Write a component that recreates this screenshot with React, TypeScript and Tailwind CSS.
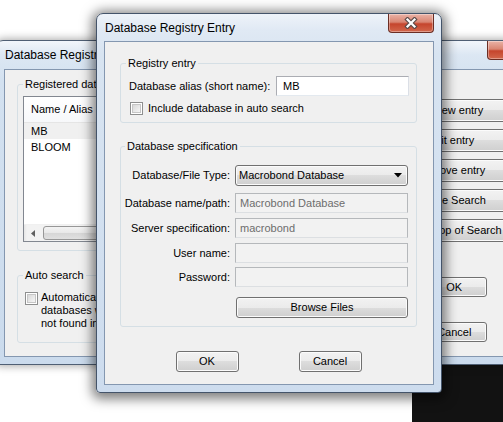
import type { ReactNode } from 'react'

const btnFace =
  'rounded-[3px] border border-[#707070] bg-[linear-gradient(#f2f2f2,#ebebeb_50%,#dddddd_50%,#cfcfcf)] shadow-[inset_0_0_0_1px_#fbfbfb]'

function WinButton({ children, className = '' }: { children: ReactNode; className?: string }) {
  return (
    <div className={`flex items-center justify-center text-[11px] text-black ${btnFace} ${className}`}>
      {children}
    </div>
  )
}

function CloseButton({ className = '' }: { className?: string }) {
  return (
    <div
      className={`flex h-[19px] w-[46px] items-center justify-center rounded-b-[4px] border border-t-0 border-[#6b2e24] bg-[linear-gradient(#eab3a7,#d98572_45%,#c5452d_55%,#d2674c)] shadow-[inset_0_0_0_1px_rgba(255,255,255,0.35)] ${className}`}
    >
      <svg width="14" height="12" viewBox="0 0 14 12">
        <path d="M3.5 2.5 L10.5 9.5 M10.5 2.5 L3.5 9.5" stroke="#5a4a48" strokeWidth="4.4" strokeLinecap="square" />
        <path d="M3.5 2.5 L10.5 9.5 M10.5 2.5 L3.5 9.5" stroke="#ffffff" strokeWidth="2.2" strokeLinecap="square" />
      </svg>
    </div>
  )
}

function CheckBox({ className = '' }: { className?: string }) {
  return (
    <div className={`h-[13px] w-[13px] shrink-0 border border-[#8e8f8f] bg-white p-[1px] ${className}`}>
      <div className="h-full w-full border border-[#c6c6c6] bg-[linear-gradient(135deg,#d8d8d8,#f6f6f6)]" />
    </div>
  )
}

// fieldset keeps no padding so the legend sits at a fixed offset; padding goes on the inner div
function GroupBox({
  title,
  legendClass = 'ml-[5px]',
  className = '',
  inner = '',
  children,
}: {
  title: string
  legendClass?: string
  className?: string
  inner?: string
  children: ReactNode
}) {
  return (
    <fieldset className={`rounded-[3px] border border-[#d5dfe5] ${className}`}>
      <legend className={`px-[2px] text-[11px] leading-[14px] ${legendClass}`}>{title}</legend>
      <div className={inner}>{children}</div>
    </fieldset>
  )
}

function Field({ value = '' }: { value?: string }) {
  return (
    <div className="flex h-[20px] w-[173px] items-center border border-[#b5b8bb] border-b-[#dcdfe2] bg-[#f2f2f2] pl-[4px] text-[11px] text-[#6d6d6d]">
      {value}
    </div>
  )
}

function FormRow({ label, children, className = '' }: { label: string; children: ReactNode; className?: string }) {
  return (
    <div className={`flex items-center ${className}`}>
      <div className="w-[109px] text-right text-[11px]">{label}</div>
      <div className="ml-[5px]">{children}</div>
    </div>
  )
}

function BackWindow() {
  const sideButtons = [
    { text: 'New entry', pad: 'pl-[20px]' },
    { text: 'Edit entry', pad: 'pl-[14px]' },
    { text: 'Remove entry', pad: 'pl-[3px]' },
    { text: 'Enable Search', pad: 'pl-[0px]' },
    { text: 'Top of Search', pad: 'pl-[20px]' },
  ]

  return (
    <div className="absolute left-[-4px] top-[40px] flex h-[325px] w-[545px] flex-col rounded-t-[7px] rounded-b-[4px] border border-[#4f5f74] bg-[linear-gradient(#f2f6fb,#dce7f3_14px,#d3e1f0_40px,#cbdbed)] px-[7px] pb-[7px] shadow-[0_0_8px_1px_rgba(0,0,0,0.35)]">
      <div className="relative flex h-[28px] items-center pl-[1px] text-[12px]">
        Database Registry
        <CloseButton className="absolute right-0 top-0" />
      </div>
      <div className="flex flex-1 border border-[#8497b0] bg-[#f0f0f0] pl-[12px]">
        <div className="mt-[7px] flex w-[360px] flex-col">
          <GroupBox title="Registered databases" legendClass="ml-[5px]" inner="px-[5px] pb-[8px]">
            <div className="mt-[5px] flex h-[146px] flex-col border border-[#828790] bg-white">
              <div className="flex h-[26px] items-center border-b border-[#e5e5e5] bg-[linear-gradient(#ffffff,#f7f8fa)] pl-[7px] text-[11px]">
                Name / Alias
              </div>
              <div className="flex h-[16px] items-center bg-[#f0f0f0] pl-[7px] text-[11px]">MB</div>
              <div className="flex h-[16px] items-center pl-[7px] text-[11px]">BLOOM</div>
              <div className="flex-1" />
              <div className="flex h-[17px] items-center border-t border-[#f0f0f0] bg-[linear-gradient(90deg,#e6e6e6,#f2f2f2_3px,#f2f2f2)]">
                <div className="flex w-[17px] justify-center">
                  <svg width="4" height="7" viewBox="0 0 4 7">
                    <path d="M4 0 L0 3.5 L4 7 Z" fill="#606060" />
                  </svg>
                </div>
                <div className="ml-[2px] h-[14px] flex-1 rounded-[3px] border border-[#979797] bg-[linear-gradient(#f3f3f3,#e8e8e8_50%,#d6d6d6_50%,#e0e0e0)]" />
              </div>
            </div>
          </GroupBox>
          <GroupBox title="Auto search" legendClass="ml-[5px]" className="mt-[17px]" inner="pb-[12px] pl-[7px]">
            <div className="mt-[10px] flex items-start">
              <CheckBox />
              <div className="ml-[3px] mt-[-1px] text-[11px] leading-[13px]">
                Automatically search in all registered
                <br />
                databases when a time series is
                <br />
                not found in the specified database
              </div>
            </div>
          </GroupBox>
        </div>
        <div className="ml-[38px] mt-[29px] flex w-[120px] flex-col">
          {sideButtons.map((b, i) => (
            <WinButton key={b.text} className={`h-[23px] justify-start ${b.pad} ${i > 0 ? 'mt-[7px]' : ''}`}>
              {b.text}
            </WinButton>
          ))}
          <WinButton className="ml-[9px] mt-[35px] h-[20px] w-[65px]">OK</WinButton>
          <WinButton className="ml-[9px] mt-[25px] h-[20px] w-[65px]">Cancel</WinButton>
        </div>
      </div>
    </div>
  )
}

function FrontWindow() {
  return (
    <div className="absolute left-[96px] top-[13px] flex h-[380px] w-[346px] flex-col rounded-t-[7px] rounded-b-[4px] border border-[#44546a] bg-[linear-gradient(#eef3f9,#e0e9f4_16px,#d8e4f1_40px,#cddcee)] px-[7px] pb-[7px] shadow-[0_2px_12px_4px_rgba(0,0,0,0.5)]">
      <div className="relative flex h-[27px] items-center pl-[1px] text-[12px]">
        Database Registry Entry
        <CloseButton className="absolute right-0 top-0" />
      </div>
      <div className="flex flex-1 flex-col border border-[#8497b0] bg-[#f0f0f0] pl-[15px] pr-[16px]">
        <GroupBox title="Registry entry" className="mt-[14px]" inner="pb-[7px] pl-[8px] pr-[7px]">
          <div className="mt-[6px] flex items-center">
            <div className="flex-1 text-[11px]">Database alias (short name):</div>
            <div className="flex h-[20px] w-[133px] items-center border border-[#abadb3] border-b-[#e3e9ef] border-r-[#dbdfe6] bg-white pl-[6px] text-[11px]">
              MB
            </div>
          </div>
          <div className="mt-[6px] flex items-center">
            <CheckBox className="ml-[1px]" />
            <div className="ml-[5px] text-[11px] leading-[13px]">Include database in auto search</div>
          </div>
        </GroupBox>

        <GroupBox title="Database specification" legendClass="ml-[4px]" className="mt-[16px]" inner="pb-[8px] pr-[8px]">
          <FormRow label="Database/File Type:" className="mt-[12px]">
            <div className={`flex h-[21px] w-[173px] items-center justify-between pl-[3px] pr-[5px] text-[11px] ${btnFace}`}>
              Macrobond Database
              <svg width="8" height="5" viewBox="0 0 8 5">
                <path d="M0 0 L8 0 L4 4.5 Z" fill="#000" />
              </svg>
            </div>
          </FormRow>
          <FormRow label="Database name/path:" className="mt-[7px]">
            <Field value="Macrobond Database" />
          </FormRow>
          <FormRow label="Server specification:" className="mt-[5px]">
            <Field value="macrobond" />
          </FormRow>
          <FormRow label="User name:" className="mt-[5px]">
            <Field />
          </FormRow>
          <FormRow label="Password:" className="mt-[4px]">
            <Field />
          </FormRow>
          <div className="mt-[10px] flex pl-[115px]">
            <WinButton className="h-[21px] w-[172px]">Browse Files</WinButton>
          </div>
        </GroupBox>

        <div className="mt-[24px] flex justify-center gap-[60px]">
          <WinButton className="h-[21px] w-[63px]">OK</WinButton>
          <WinButton className="h-[21px] w-[63px]">Cancel</WinButton>
        </div>
      </div>
    </div>
  )
}

export default function App() {
  return (
    <div className="relative h-[422px] w-[503px] overflow-hidden bg-white font-['Liberation_Sans',Arial,sans-serif] text-black">
      <div className="absolute bottom-0 left-[412px] right-0 top-[364px] bg-[#121212]" />
      <BackWindow />
      <FrontWindow />
    </div>
  )
}
